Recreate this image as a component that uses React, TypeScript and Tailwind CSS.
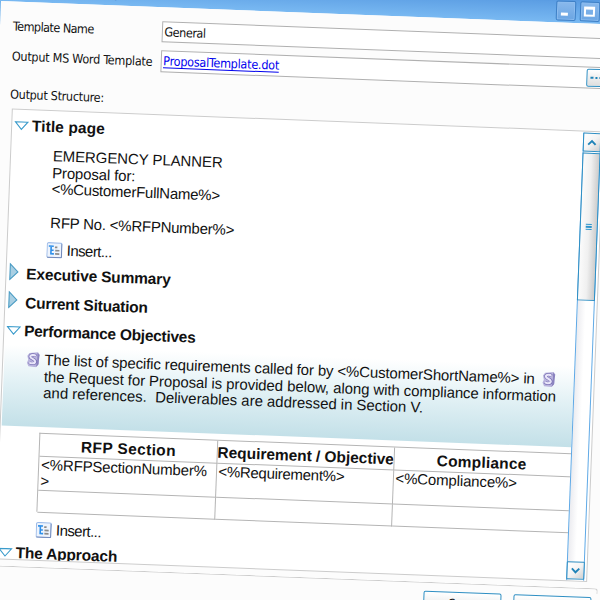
import { useLayoutEffect, useRef, useState, type ReactNode } from "react";

const tahoma = "font-['DejaVu_Sans_Condensed','DejaVu_Sans',sans-serif] [font-stretch:condensed] text-[12.5px]";

/** One line of text, tracked so that it fills the given width. */
function Fit({ w, className = "", children }: { w: number; className?: string; children: string }) {
  const ref = useRef<HTMLSpanElement>(null);
  const [spacing, setSpacing] = useState(0);
  useLayoutEffect(() => {
    const el = ref.current;
    if (!el) return;
    el.style.letterSpacing = "0px";
    const next = (w - el.offsetWidth) / children.length;
    el.style.letterSpacing = `${next}px`;
    setSpacing(next);
  }, [w, children]);
  return (
    <span ref={ref} className={`inline-block shrink-0 whitespace-pre ${className}`} style={{ letterSpacing: `${spacing}px` }}>
      {children}
    </span>
  );
}

function Twisty({ open }: { open: boolean }) {
  return open ? (
    <svg className="ml-[2px] w-[15px] shrink-0" height="10" viewBox="0 0 15 10">
      <path d="M1 1H13.6L7.3 8.4Z" fill="#fff" stroke="#3a9bcb" strokeWidth="1.1" />
    </svg>
  ) : (
    <svg className="-mt-[4px] ml-[2px] w-[15px] shrink-0" height="18" viewBox="0 0 15 18">
      <path d="M1.5 1.2V16.8L9.3 9Z" fill="#a9cfe3" stroke="#4a9cc4" strokeWidth="1.1" />
    </svg>
  );
}

function Heading({ open = false, w, className = "h-[28.5px]", children }: { open?: boolean; w: number; className?: string; children: string }) {
  return (
    <div className={`flex shrink-0 items-center gap-[3px] text-[15.5px] font-bold leading-[18px] ${className}`}>
      <Twisty open={open} />
      <Fit w={w} className="pt-[1px]">{children}</Fit>
    </div>
  );
}

function Insert({ className }: { className: string }) {
  return (
    <div className={`flex h-[20.6px] shrink-0 items-center gap-[4px] pl-[39.5px] leading-[18px] ${className}`}>
      <svg className="-mt-[1px] shrink-0" width="16" height="16" viewBox="0 0 16 16">
        <rect x="0.6" y="0.6" width="14.8" height="14.8" rx="1.5" fill="#eef4fd" stroke="#9dbbe8" strokeWidth="1.1" />
        <path d="M1 15.2H15.2V1.5" fill="none" stroke="#6d83b5" strokeWidth="0.9" />
        <path d="M2.2 4H7.2M4.6 4V11.6H7.6M4.6 8H7.2" fill="none" stroke="#2f8fe8" strokeWidth="1.6" />
        <path d="M8.4 5H10.8M8.8 8.3H13M8.8 11.6H13" stroke="#8b8b8b" strokeWidth="1.7" />
      </svg>
      <Fit w={45}>Insert...</Fit>
    </div>
  );
}

function SectionMark() {
  return (
    <svg className="shrink-0" width="14" height="16" viewBox="0 0 14 16">
      <path d="M3 1.5L11.5 0.5L13.3 3L12.3 6L12.8 12L10 15.5L2.5 15L0.8 11.5L2 8.5L1 4.5Z" fill="#b9b4dd" />
      <path d="M11 1L13.2 3.2L12.3 13L10 15.4L11 9Z" fill="#8a83bf" />
      <path d="M9.6 4.4C8.5 2.8 3.9 2.9 3.8 5.2C3.8 7.7 9.5 7.2 9.4 10C9.2 12.5 4.2 12.5 3.2 10.9" fill="none" stroke="#7a72b5" strokeWidth="3.2" />
      <path d="M9.3 4.3C8.3 2.9 4 3 3.9 5.2C3.9 7.6 9.2 7.3 9.1 10C8.9 12.3 4.4 12.3 3.2 10.9" fill="none" stroke="#e9e6f9" strokeWidth="2" />
    </svg>
  );
}

function Cell({ className = "", children }: { className?: string; children?: ReactNode }) {
  return <div className={`overflow-hidden border-b border-r border-[#b5b5b5] ${className}`}>{children}</div>;
}

function ScrollBar() {
  const cap = "flex h-[18.5px] shrink-0 items-center justify-center rounded-[1px] border-[1.5px] border-[#2f8fc3] bg-gradient-to-br from-white via-[#f4f4f4] to-[#cfcfcf]";
  return (
    <div className="mt-[1.5px] flex w-[18px] shrink-0 flex-col border-x border-[#5fa9e6] bg-gradient-to-r from-[#ececf0] via-white to-white">
      <div className={`-mx-px ${cap}`}>
        <svg width="10" height="8" viewBox="0 0 10 8"><path d="M1.3 6L5 2.2L8.7 6" fill="none" stroke="#1f83b8" strokeWidth="1.9" /></svg>
      </div>
      <div className="-mx-px mt-[1px] flex h-[148px] shrink-0 flex-col items-center justify-center gap-[1px] border-[1.5px] border-[#2f8fc3] bg-gradient-to-r from-[#fbfbfb] via-[#f0f0f0] to-[#cccccc]">
        <i className="h-[1.5px] w-[6px] bg-[#2f95cc]" />
        <i className="h-[1.5px] w-[6px] bg-[#2f95cc]" />
        <i className="h-[1.5px] w-[6px] bg-[#2f95cc]" />
      </div>
      <div className={`-mx-px mb-[1px] mt-auto ${cap}`}>
        <svg width="10" height="8" viewBox="0 0 10 8"><path d="M1.3 2L5 5.8L8.7 2" fill="none" stroke="#1f83b8" strokeWidth="1.9" /></svg>
      </div>
    </div>
  );
}

const windowButton = "flex h-[20px] w-[20px] items-center justify-center rounded-[2px] border border-[#3f80c6] bg-gradient-to-b from-[#8ab9ec] to-[#6aa5e3] shadow-[inset_0_0_0_1px_#8dbdf0]";

export default function App() {
  return (
    <div className="h-[600px] w-[600px] overflow-hidden bg-[#fcfcfc] font-['Liberation_Sans',Arial,sans-serif] text-[15px] text-[#111]">
      <div className="-mt-[40px] flex h-[680px] w-[660px] origin-[0_40px] rotate-[2.2deg] flex-col">
        <header className="flex h-[41px] shrink-0 items-start bg-gradient-to-b from-[#4a8edb] from-30% via-[#5d9fe4] via-50% to-[#79b9f2] pt-[18.8px]">
          <div className={`${tahoma} w-[556px] pl-[46px] pt-[1px] leading-[18px] text-[#2a62a8]`}>
            <Fit w={104}>Template Properties</Fit>
          </div>
          <div className="flex gap-[3.5px]">
            <span className={windowButton}><i className="mt-[7px] mr-[3px] h-[3px] w-[7px] bg-white" /></span>
            <span className={windowButton}><i className="h-[10px] w-[11px] border-2 border-t-[3px] border-white" /></span>
          </div>
        </header>

        <main className="flex min-h-0 flex-1 flex-col border-l border-[#6aaeea] bg-[#fcfcfc]">
          <div className="mt-[13.7px] flex h-[21.5px] shrink-0 items-center">
            <div className={`${tahoma} w-[161.5px] pl-[13px] pt-[1px] leading-[18px]`}><Fit w={81}>Template Name</Fit></div>
            <div className={`${tahoma} flex h-full w-[470px] items-center border border-[#b0b0b0] bg-white pl-[2px] pt-[1px] leading-[18px]`}><Fit w={41}>General</Fit></div>
          </div>
          <div className="mt-[8.3px] flex h-[21.5px] shrink-0 items-center">
            <div className={`${tahoma} w-[161.5px] pl-[13px] pt-[2px] leading-[18px]`}><Fit w={141}>Output MS Word Template</Fit></div>
            <div className={`${tahoma} flex h-full w-[470px] items-center border border-[#b0b0b0] bg-white pl-[2px] leading-[18px]`}>
              <a className="w-[423.5px] text-[#0000ee]"><Fit w={116} className="underline underline-offset-[2px]">ProposalTemplate.dot</Fit></a>
              <span className="flex h-[17.5px] w-[20px] items-center justify-center gap-[2px] rounded-[2px] border-[1.5px] border-[#2f8fc3] bg-gradient-to-b from-white to-[#dedede]">
                <i className="h-[2.5px] w-[2.5px] bg-[#1f83b8]" />
                <i className="h-[2.5px] w-[2.5px] bg-[#1f83b8]" />
                <i className="h-[2.5px] w-[2.5px] bg-[#1f83b8]" />
              </span>
            </div>
          </div>
          <div className={`${tahoma} mt-[19px] h-[22.9px] shrink-0 pl-[12.8px] leading-[18px]`}><Fit w={94}>Output Structure:</Fit></div>

          <section className="ml-[14.8px] flex h-[451.5px] w-[593px] shrink-0 overflow-hidden border border-[#cccccc] bg-white">
            <div className="flex w-[571px] shrink-0 flex-col overflow-hidden">
              <Heading open w={73} className="h-[32px]">Title page</Heading>
              <div className="mt-[5px] flex h-[84px] shrink-0 flex-col pl-[42px] leading-[16.8px]">
                <Fit w={169.5} className="self-start">EMERGENCY PLANNER</Fit>
                <Fit w={83} className="self-start">Proposal for:</Fit>
                <Fit w={168} className="self-start">{"<%CustomerFullName%>"}</Fit>
                <div className="h-[16.8px]" />
                <Fit w={184} className="self-start">{"RFP No. <%RFPNumber%>"}</Fit>
              </div>
              <Insert className="mt-[8px]" />
              <Heading w={144}>Executive Summary</Heading>
              <Heading w={123}>Current Situation</Heading>
              <Heading open w={171}>Performance Objectives</Heading>

              <div className="ml-[1px] flex h-[81px] shrink-0 items-start bg-gradient-to-b from-white via-[#e2f1f5] via-45% to-[#c3e0e8] pl-[22.5px] pt-[6.4px]">
                <SectionMark />
                <div className="ml-[4px] flex w-[497.5px] flex-col leading-[16.5px]">
                  <Fit w={490.5} className="self-start">{"The list of specific requirements called for by <%CustomerShortName%> in"}</Fit>
                  <Fit w={512} className="self-start">the Request for Proposal is provided below, along with compliance information</Fit>
                  <Fit w={380} className="self-start">{"and references.  Deliverables are addressed in Section V."}</Fit>
                </div>
                <SectionMark />
              </div>

              <div className="ml-[39.7px] mt-[6.2px] grid h-[79px] shrink-0 grid-cols-[177.3px_177.3px_180px] grid-rows-[22.7px_33.8px_22px] border-l border-t border-[#b5b5b5]">
                <Cell className="pt-[2.5px] text-center text-[15.5px] font-bold leading-[18px]"><Fit w={95}>RFP Section</Fit></Cell>
                <Cell className="pt-[2.5px] text-[15.5px] font-bold leading-[18px]"><Fit w={176}>Requirement / Objective</Fit></Cell>
                <Cell className="pr-[5px] pt-[2.5px] text-center text-[15.5px] font-bold leading-[18px]"><Fit w={90}>Compliance</Fit></Cell>
                <Cell className="flex flex-col items-start pl-[1.5px] leading-[16.6px]">
                  <Fit w={166}>{"<%RFPSectionNumber%"}</Fit>
                  <Fit w={9}>{">"}</Fit>
                </Cell>
                <Cell className="pl-[1.5px] leading-[16.6px]"><Fit w={126}>{"<%Requirement%>"}</Fit></Cell>
                <Cell className="pl-[1.5px] leading-[16.6px]"><Fit w={121}>{"<%Compliance%>"}</Fit></Cell>
                <Cell />
                <Cell />
                <Cell />
              </div>
              <Insert className="mt-[7.6px]" />
              <Heading open w={102} className="h-[27px]">The Approach</Heading>
            </div>
            <ScrollBar />
          </section>

          <div className="mt-[6px] h-[6px] w-[619px] shrink-0 rounded-tr-[3px] border-r border-t border-[#cccccc]" />
          <div className="ml-[445px] mt-[3px] flex shrink-0 gap-[12px]">
            <button className={`${tahoma} h-[24px] w-[78px] rounded-[2px] border-[1.5px] border-[#2f8fc3] bg-gradient-to-b from-white to-[#dedede]`}>Save</button>
            <button className={`${tahoma} h-[24px] w-[78px] rounded-[2px] border-[1.5px] border-[#2f8fc3] bg-gradient-to-b from-white to-[#dedede]`}>Cancel</button>
          </div>
        </main>
      </div>
    </div>
  );
}
